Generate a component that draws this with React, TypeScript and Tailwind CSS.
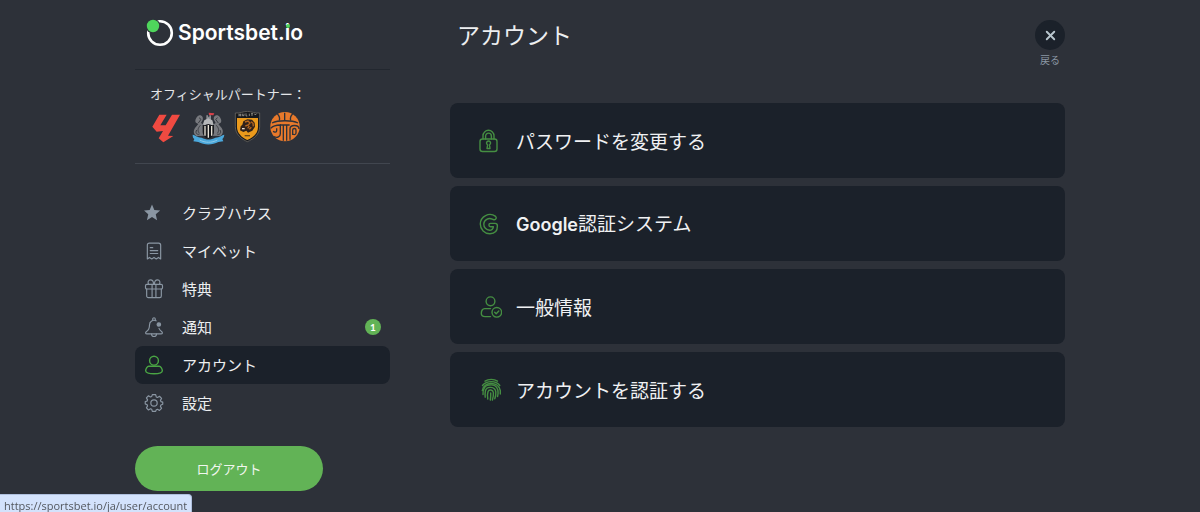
import type { ReactNode } from 'react';
import { X } from 'lucide-react';

type NavItem = {
  label: string;
  icon: ReactNode;
  active?: boolean;
  badge?: number;
};

type IconProps = {
  children: ReactNode;
  size?: string;
};

function LineIcon({ children, size = 'size-6' }: IconProps) {
  return (
    <svg
      viewBox="0 0 24 24"
      className={`shrink-0 ${size}`}
      fill="none"
      stroke="currentColor"
      strokeWidth="1.4"
      strokeLinecap="round"
      strokeLinejoin="round"
      aria-hidden="true"
    >
      {children}
    </svg>
  );
}

const navItems: NavItem[] = [
  {
    label: 'クラブハウス',
    icon: (
      <LineIcon size="size-5">
        <path
          d="M9.6 1.8l2.8 6.5 7 .6-5.300 4.700 1.600 7-6.100-3.700-6.100 3.700 1.600-7L-.2 8.900l7-.6z"
          fill="currentColor"
          stroke="none"
        />
      </LineIcon>
    ),
  },
  {
    label: 'マイベット',
    icon: (
      <LineIcon size="size-5">
        <path d="M4 21.5V5a2.500 2.500 0 0 1 2.500-2.500h11A2.500 2.500 0 0 1 20 5v16.500l-2.600-1.800-2.700 1.800-2.700-1.800-2.700 1.800-2.700-1.800z" />
        <path d="M7.5 8h3M7.5 11.5h9M7.5 15h9" />
      </LineIcon>
    ),
  },
  {
    label: '特典',
    icon: (
      <LineIcon size="size-5">
        <rect x="1.8" y="6.5" width="20.4" height="5.5" rx="1.6" />
        <path d="M3.200 12v8.300a2 2 0 0 0 2 2h13.600a2 2 0 0 0 2-2V12M9.700 6.500v15.800M14.300 6.500v15.800" />
        <path d="M11.500 6.500C11.500 3 10 1 7.700 1 5 1 4.200 4 5.500 6.500M12.500 6.500C12.500 3 14 1 16.300 1c2.700 0 3.500 3 2.200 5.500" />
      </LineIcon>
    ),
  },
  {
    label: '通知',
    badge: 1,
    icon: (
      <LineIcon size="size-5">
        <path d="M14.500 4.600A5.400 5.400 0 0 0 6.600 9.500c0 4.500-1.200 6.300-3.600 7.900-1.700 1.200-1.300 2.900.6 2.900h16.800c1.900 0 2.300-1.700.6-2.900-1.400-1-2.400-2.100-3-3.800" />
        <path d="M10.500 3.700V2.400a1.500 1.500 0 0 1 3 0v1.300M9 20.500a3 3 0 0 0 6 0" />
        <circle cx="17.800" cy="9" r="2.100" fill="currentColor" />
      </LineIcon>
    ),
  },
  {
    label: 'アカウント',
    active: true,
    icon: (
      <LineIcon size="size-5">
        <circle cx="12" cy="6.8" r="5.3" strokeWidth="1.7" />
        <path
          d="M5.800 13.500h12.400c2 0 3.800 3.200 3.800 5.400 0 2.600-5 3.600-10 3.600s-10-1-10-3.600c0-2.200 1.800-5.400 3.800-5.400z"
          strokeWidth="1.7"
        />
      </LineIcon>
    ),
  },
  {
    label: '設定',
    icon: (
      <LineIcon size="size-5">
        <circle cx="12" cy="12" r="3.8" />
        <path d="M10 2h4l.7 2.700 1.500.6 2.400-1.400 2.500 2.500-1.400 2.400.6 1.500L22.500 11v2.500l-2.200 1-.6 1.500 1.400 2.400-2.500 2.500-2.400-1.400-1.500.6L14 22h-4l-.7-2.400-1.500-.6-2.400 1.400-2.500-2.500 1.400-2.400-.6-1.500-2.200-.8v-3l2.200-.5.6-1.500-1.400-2.400 2.500-2.500 2.400 1.400 1.500-.6z" />
      </LineIcon>
    ),
  },
];

const accountLinks = [
  {
    label: 'パスワードを変更する',
    icon: (
      <LineIcon>
        <rect x="2" y="10" width="17" height="12.5" rx="2.5" />
        <path d="M5 10V6.800a5.500 5.500 0 0 1 11 0V10M7.600 10V7a2.900 2.900 0 0 1 5.800 0v3" />
        <path d="M9.600 15.800a2 2 0 1 1 1.900 0l.5 3.700H9z" />
      </LineIcon>
    ),
  },
  {
    label: 'Google認証システム',
    icon: (
      <LineIcon>
        <path d="M16.300 7.700a1.900 1.900 0 0 0 1.300-3.300A9.600 9.600 0 0 0 2.300 12a9.600 9.600 0 0 0 9.700 9.700c4.600 0 7.400-3 7.400-7.700 0-1.800-.7-2.600-2.300-2.600h-4.500a1.700 1.700 0 0 0 0 3.400h2.800c-.4 2.200-1.800 3.400-3.800 3.400a5.900 5.900 0 0 1-5.800-6.200c0-4.300 4.900-6.600 8.500-4.800.7.400 1.300.7 2 .5z" />
      </LineIcon>
    ),
  },
  {
    label: '一般情報',
    icon: (
      <LineIcon>
        <circle cx="12.5" cy="6.3" r="4.4" />
        <path d="M12.500 13.600H6.600c-2 0-3.300 2.200-3.300 4.700 0 2 1.200 3.300 3.700 3.300h5.500" />
        <circle cx="18.8" cy="17.3" r="4.8" />
        <path d="M16.700 17.300l1.500 1.500 2.600-2.700" />
      </LineIcon>
    ),
  },
  {
    label: 'アカウントを認証する',
    icon: (
      <LineIcon>
        <path d="M7 3.200C10.500.8 16 .8 19.500 3.200M4.500 7.500c4-5.200 13.500-5.200 17.300 0M4.300 12.500c1-9 16-9.800 18 0v3.500" />
        <path d="M5 16.500c-.3-6 1.700-9.600 8.300-9.600 5 0 7 4 6.800 8.300l-.5 3.300M7.200 19.200c-.3-2.400-.2-4 .2-6.200 1.200-5.300 9.800-4.700 10.400 1 .2 2.400-.2 4.700-1 6.800" />
        <path d="M9.800 21c-.6-3-.5-5 .2-7.200 1-2.800 5-2.200 5.400.9.200 2.300-.2 4.700-1 7.300M12.700 15c0 2.400.1 4.700-.4 7" />
      </LineIcon>
    ),
  },
];

function Logo() {
  return (
    <a href="/ja" className="flex items-center gap-1 text-white">
      <svg viewBox="0 0 28 28" className="size-7" aria-hidden="true">
        <circle cx="14" cy="14" r="11.8" fill="none" stroke="#fff" strokeWidth="2.6" />
        <circle cx="7" cy="7" r="7.3" fill="#2d3139" />
        <circle cx="7" cy="7" r="6.2" fill="#4fd55c" />
      </svg>
      <span className="font-['Inter'] text-[21px] leading-7 font-semibold">
        Sportsbet.
        <span className="relative">
          i
          <span className="absolute top-[4px] left-[1px] size-1 rounded-full bg-[#4fd55c]" />
        </span>
        o
      </span>
    </a>
  );
}

function PartnerLogos() {
  return (
    <div className="flex gap-[9px] pl-[17px]">
      <svg viewBox="0 0 90 102" className="h-[34px] w-[30px]" role="img">
        <path
          d="M22 11H44L25 43L41 43L60 11H84L48 74L64 75L34 94L20 82L33 60L14 62L1 47Z"
          fill="#f04a41"
        />
      </svg>

      <svg viewBox="0 0 102 102" className="size-[34px]" role="img">
        <path d="M46 30V13h5v4h4v-4h5v17z" fill="#8b8d92" />
        <path d="M53 5l17 2-3 6-13-1z" fill="#d9414a" />
        <path d="M40 28l12-6 12 6 4 14-7 5H43l-8-5z" fill="#b5b6b8" />
        <path
          d="M22 14c9-4 16 4 13 13l-5 9 11 7 2 31-27 1C8 70 6 60 12 51l10-12-7-4c-5-6 1-18 7-21z"
          fill="#77797e"
        />
        <path
          d="M82 14c-9-4-16 4-13 13l5 9-11 7-2 31 27 1c8-5 10-15 4-24L82 39l7-4c5-6-1-18-7-21z"
          fill="#77797e"
        />
        <path
          d="M24 20l6 5-8 11M17 57c-5 9 0 14 8 13M28 43c-8 9-9 16-3 24M80 20l-6 5 8 11M87 57c5 9 0 14-8 13M76 43c8 9 9 16 3 24"
          fill="none"
          stroke="#3b3d43"
          strokeWidth="3"
        />
        <path d="M35 42c9 2 12-3 17-3s8 5 17 3v20c0 12-9 18-17 22-8-4-17-10-17-22z" fill="#17181c" />
        <path d="M42 45v29M52 42v38M62 45v29" stroke="#e8e3d7" strokeWidth="4" />
        <path
          d="M5 71c11 2 12 8 27 9 13 7 29 7 41 0 15-1 16-7 27-9-1 8-4 11-6 13l3 7-15 2C65 103 39 103 22 93L7 91l3-7c-4-3-5-6-5-13z"
          fill="#4ba8dc"
        />
        <path d="M26 87c17 9 36 9 53 0" fill="none" stroke="#8cc9e8" strokeWidth="3" />
      </svg>

      <svg viewBox="0 0 81 102" className="h-[34px] w-[27px]" role="img">
        <path
          d="M4 6c15 1 22-4 36-5 14 1 22 6 37 5v41c0 23-18 37-37 45C22 84 4 70 4 47z"
          fill="#17191d"
          stroke="#77736b"
          strokeWidth="2"
        />
        <path d="M9 21h63v27c0 19-14 31-32 39C23 79 9 67 9 48z" fill="#eb9a1c" />
        <path
          d="M15 8v8M20 8v8M15 12h5M25 8v6h5V8M36 7v8h4M46 8v7M51 8h6M54 8v7M61 8l3 4 3-4"
          fill="none"
          stroke="#b9b5aa"
          strokeWidth="2"
        />
        <path d="M28 31l12-6 14 1 8 9 1 12-8 12-13 6-5-6-9 4-10-5 2-12 5-5z" fill="#30221b" />
        <path
          d="M33 33l9-3 6 6-5 6-9 3M51 32l6 5 1 9M46 45l-5 7M52 49l-6 6"
          fill="none"
          stroke="#b8671e"
          strokeWidth="4"
        />
        <path d="M24 51h8v4h-8z" fill="#e9ded0" />
        <path d="M32 74h16" stroke="#6f4915" strokeWidth="4" />
      </svg>

      <svg viewBox="0 0 90 102" className="h-[34px] w-[30px]" role="img">
        <circle cx="45" cy="47" r="44" fill="#e8792b" />
        <g fill="none" stroke="#2d3139" strokeWidth="4">
          <path d="M44 5v23M22 9c7 6 8 12 6 20M68 9c-7 6-8 12-6 20" />
          <path d="M6 36c18-9 60-9 78 0M2 52c8-9 15-10 29-10v26c0 9-9 14-19 9" />
          <path d="M10 60c2 5 10 4 10-1v-7M40 43v46M50 43v46M30 42h29" />
          <path d="M60 86V54c0-14 27-14 27 0M68 72V57c0-6 10-6 10 0v9c0 6-10 6-10 1" />
        </g>
      </svg>
    </div>
  );
}

function Sidebar() {
  return (
    <aside className="w-[255px] shrink-0">
      <div className="flex h-[70px] items-start border-b border-[#22272f] pt-[19px] pl-[11px]">
        <Logo />
      </div>

      <section className="border-b border-[#41464f] pt-[14px] pb-[18px]">
        <p className="mb-[7px] pl-[15px] text-[13px] leading-5 text-[#e3e5e8]">
          オフィシャルパートナー：
        </p>
        <PartnerLogos />
      </section>

      <nav className="mt-[30px]">
        {navItems.map((item) => (
          <a
            key={item.label}
            href="#"
            aria-current={item.active ? 'page' : undefined}
            className={`flex h-[38px] items-center rounded-lg px-[9px] ${
              item.active ? 'bg-[#1b212a] text-[#4aa544]' : 'text-[#8a96a3]'
            }`}
          >
            {item.icon}
            <span className="ml-[18px] text-[15px] leading-6 text-[#eceef0]">{item.label}</span>
            {item.badge && (
              <span className="ml-auto flex size-4 items-center justify-center rounded-full bg-[#62b356] font-['Lato'] text-[10px] font-bold text-white">
                {item.badge}
              </span>
            )}
          </a>
        ))}
      </nav>

      <button
        type="button"
        className="mt-6 h-[45px] w-[188px] rounded-full bg-[#62b356] text-[13px] text-[#f1f6ef]"
      >
        ログアウト
      </button>
    </aside>
  );
}

export default function App() {
  return (
    <div className="relative min-h-screen bg-[#2d3139] font-['Noto_Sans_CJK_JP','Liberation_Sans',sans-serif]">
      <div className="mx-auto flex max-w-[930px] gap-[60px]">
        <Sidebar />

        <main className="min-w-0 flex-1 pt-5">
          <header className="flex items-start justify-between pl-[7px]">
            <h1 className="text-[23px] leading-7 text-[#eceef0]">アカウント</h1>
            <button type="button" className="flex flex-col items-center gap-[2px] text-[#8a96a3]">
              <span className="flex size-[30px] items-center justify-center rounded-full bg-[#1b212a] text-[#b9c6ce]">
                <X size={15} strokeWidth={3} />
              </span>
              <span className="text-[10px] leading-4">戻る</span>
            </button>
          </header>

          <ul className="mt-[35px] flex flex-col gap-2">
            {accountLinks.map((link) => (
              <li key={link.label}>
                <a
                  href="#"
                  className="flex h-[75px] items-center gap-[14px] rounded-lg bg-[#1b212a] pl-7 text-[#458e42]"
                >
                  {link.icon}
                  <span className="text-[19px] leading-7 text-[#f0f1f3]">
                    {link.label.startsWith('Google') ? (
                      <>
                        <span className="font-['Inter'] text-[18px] font-semibold">Google</span>
                        {link.label.slice(6)}
                      </>
                    ) : (
                      link.label
                    )}
                  </span>
                </a>
              </li>
            ))}
          </ul>
        </main>
      </div>

      <div className="fixed bottom-0 left-0 h-[18px] rounded-tr border-t border-r border-[#aebfdd] bg-[#d3e2fc] px-1 font-['Open_Sans'] text-[11px] leading-[22px] text-[#53575e]">
        https://sportsbet.io/ja/user/account
      </div>
    </div>
  );
}
